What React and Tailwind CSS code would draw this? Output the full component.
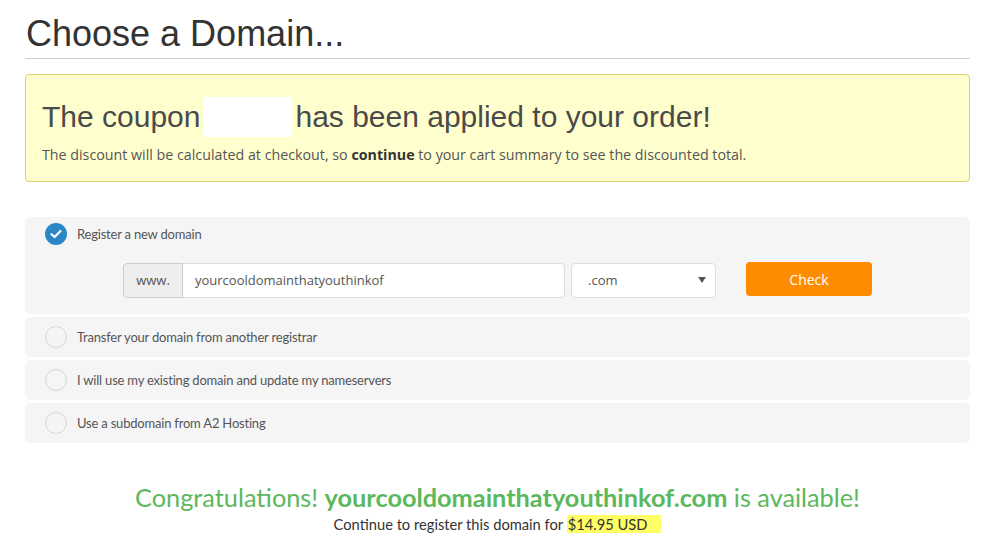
import React from "react";

const cond = { fontFamily: 'Lato, "Open Sans", sans-serif' };

function Radio({ checked }) {
  if (checked) {
    return (
      <span className="flex h-[22px] w-[22px] items-center justify-center rounded-full bg-[#2a86c7]">
        <svg width="12" height="10" viewBox="0 0 12 10">
          <path d="M1.5 5.2 L4.6 8 L10.5 2" fill="none" stroke="white" strokeWidth="2.2" strokeLinecap="round" strokeLinejoin="round" />
        </svg>
      </span>
    );
  }
  return <span className="block h-[22px] w-[22px] rounded-full border border-[#d4d4d4] bg-[#f5f5f5]" />;
}

function Option({ label }) {
  return (
    <div className="flex h-[40px] items-center gap-[10px] rounded-[5px] bg-[#f5f5f5] pl-[20px]">
      <Radio />
      <span className="text-[13px] tracking-[-0.2px] text-[#555]" style={cond}>{label}</span>
    </div>
  );
}

export default function App() {
  return (
    <div className="min-h-[547px] bg-white pl-[25px] pr-[11px] pt-[14px]" style={{ fontFamily: '"Liberation Sans", Arial, sans-serif' }}>
      <h1 className="pl-[1px] text-[36px] leading-[40px] text-[#333]">Choose a Domain...</h1>
      <div className="mt-[4px] h-px bg-[#cccccc]" />

      <div className="mt-[15px] rounded-[4px] border border-[#dccf6b] bg-[#ffffcd] px-[16px] pb-[16px] pt-[22px]">
        <div className="flex items-center text-[30px] leading-[40px] text-[#4a4a4a]">
          <span>The coupon</span>
          <span className="mx-[3px] inline-block h-[40px] w-[89px] bg-white" />
          <span>has been applied to your order!</span>
        </div>
        <p className="mt-[7px] text-[14.25px] text-[#555]" style={{ fontFamily: '"Open Sans", sans-serif' }}>
          The discount will be calculated at checkout, so <b className="text-[#333]">continue</b> to your cart summary to see the discounted total.
        </p>
      </div>

      <div className="mt-[35px] flex flex-col gap-[3px]">
        <div className="rounded-[5px] bg-[#f5f5f5] pb-[16px] pt-[6px]">
          <div className="flex items-center gap-[10px] pl-[20px]">
            <Radio checked />
            <span className="text-[13px] tracking-[-0.2px] text-[#555]" style={cond}>Register a new domain</span>
          </div>
          <div className="mt-[17px] flex items-center pl-[98px]" style={{ fontFamily: '"Open Sans", sans-serif' }}>
            <span className="flex h-[35px] w-[60px] items-center justify-center rounded-l-[4px] border border-[#cccccc] bg-[#eeeeee] text-[13px] text-[#555]">www.</span>
            <span className="flex h-[35px] w-[382px] items-center rounded-r-[4px] border border-l-0 border-[#dddddd] bg-white pl-[12px] text-[13px] text-[#555]">yourcooldomainthatyouthinkof</span>
            <span className="ml-[6px] flex h-[35px] w-[145px] items-center justify-between rounded-[4px] border border-[#dddddd] bg-white pl-[16px] pr-[9px] text-[13px] text-[#555]">
              .com
              <svg width="8" height="6" viewBox="0 0 8 6"><path d="M0 0 H8 L4 6 Z" fill="#555" /></svg>
            </span>
            <button className="ml-[30px] mb-[2px] flex h-[34px] w-[126px] items-center justify-center rounded-[4px] bg-[#ff8c00] text-[14px] text-white">Check</button>
          </div>
        </div>
        <Option label="Transfer your domain from another registrar" />
        <Option label="I will use my existing domain and update my nameservers" />
        <Option label="Use a subdomain from A2 Hosting" />
      </div>

      <div className="mt-[38px] text-center" style={cond}>
        <div className="text-[25.3px] leading-[32px] text-[#5cb85c]">
          Congratulations! <b>yourcooldomainthatyouthinkof.com</b> is available!
        </div>
        <div className="mt-[1px] text-[14.7px] leading-[20px] text-[#333]">
          Continue to register this domain for <span className="bg-[#ffff66] pl-[1px] pr-[14px]">$14.95 USD</span>
        </div>
      </div>
    </div>
  );
}
